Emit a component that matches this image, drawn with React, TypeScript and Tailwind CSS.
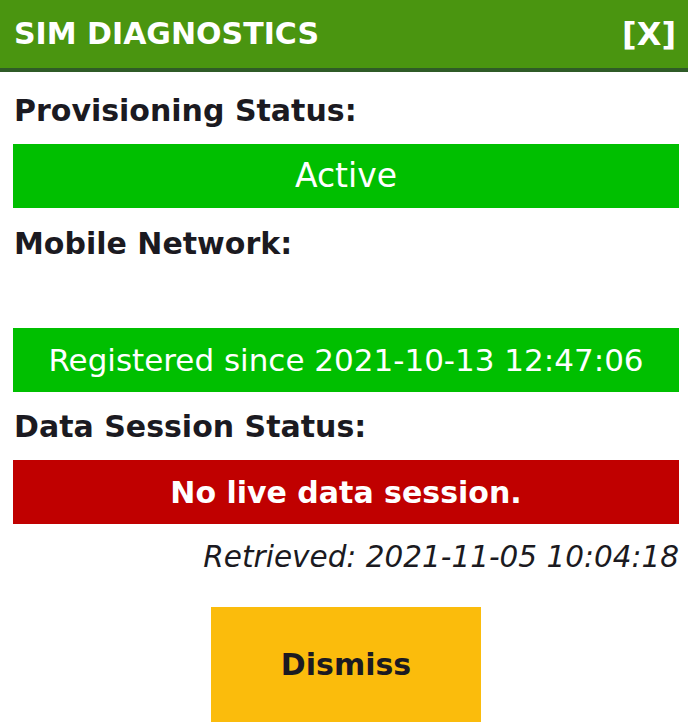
export default function App() {
    return (
        <div className="w-[688px] h-[722px] overflow-hidden bg-white text-[#1b1a21]" style={{ fontFamily: '"DejaVu Sans", sans-serif' }}>
            {/* Header */}
            <div className="h-[72px] bg-[#4a9510] border-b-[4px] border-[#2f5b27] flex items-center justify-between pl-[14px] pr-[12px] text-white font-bold">
                <span className="text-[30px] leading-none">SIM DIAGNOSTICS</span>
                <span className="text-[32px] leading-none">[X]</span>
            </div>

            <div className="pl-[13px] pr-[9px]">
                {/* Provisioning */}
                <div className="h-[72px] pt-[4px] flex items-center pl-[1px] text-[30px] font-bold">Provisioning Status:</div>
                <div className="h-[64px] bg-[#00bf00] flex items-center justify-center text-white text-[33px]">
                    Active
                </div>

                {/* Mobile network */}
                <div className="h-[70px] flex items-center pl-[1px] text-[30px] font-bold">Mobile Network:</div>
                <div className="h-[50px]" />
                <div className="h-[64px] bg-[#00bf00] flex items-center justify-center text-white text-[31px]">
                    Registered since 2021-10-13 12:47:06
                </div>

                {/* Data session */}
                <div className="h-[68px] flex items-center pl-[1px] text-[30px] font-bold">Data Session Status:</div>
                <div className="h-[64px] bg-[#c00000] flex items-center justify-center text-white text-[30px] font-bold">
                    No live data session.
                </div>

                <div className="h-[66px] flex items-center justify-end text-[29.5px] italic">
                    Retrieved: 2021-11-05 10:04:18
                </div>

                <div className="pt-[17px] flex justify-center">
                    <button className="w-[270px] h-[115px] bg-[#fbbc0c] text-[30px] font-bold text-[#1b1a21]">
                        Dismiss
                    </button>
                </div>
            </div>
        </div>
    );
}
